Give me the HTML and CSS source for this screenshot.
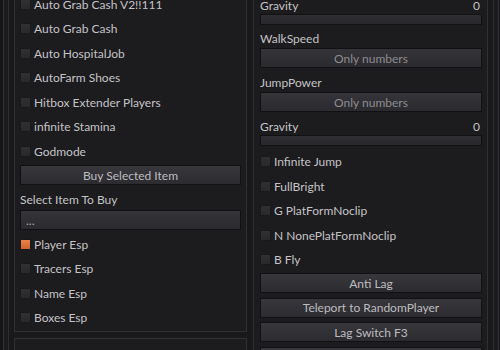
FILE: index.html
```html
<!DOCTYPE html>
<html>
<head>
<meta charset="utf-8">
<link rel="stylesheet" href="styles.css">
</head>
<body>
<div class="window">
  <div class="inner">
    <div class="col-left">
      <div class="panel panel-left">
        <div class="row"><span class="cb"></span><span>Auto Grab Cash V2!!111</span></div>
        <div class="row"><span class="cb"></span><span>Auto Grab Cash</span></div>
        <div class="row"><span class="cb"></span><span>Auto HospitalJob</span></div>
        <div class="row"><span class="cb"></span><span>AutoFarm Shoes</span></div>
        <div class="row"><span class="cb"></span><span>Hitbox Extender Players</span></div>
        <div class="row"><span class="cb"></span><span>infinite Stamina</span></div>
        <div class="row"><span class="cb"></span><span>Godmode</span></div>
        <div class="btn btn-buy">Buy Selected Item</div>
        <div class="label label-select">Select Item To Buy</div>
        <div class="input input-left">...</div>
        <div class="row row-esp"><span class="cb on"></span><span>Player Esp</span></div>
        <div class="row"><span class="cb"></span><span>Tracers Esp</span></div>
        <div class="row"><span class="cb"></span><span>Name Esp</span></div>
        <div class="row"><span class="cb"></span><span>Boxes Esp</span></div>
      </div>
      <div class="panel panel-bottom"></div>
    </div>
    <div class="col-right">
      <div class="panel panel-right">
        <div class="slider-head"><span>Gravity</span><span>0</span></div>
        <div class="slider-bar"></div>
        <div class="label label-field label-walk">WalkSpeed</div>
        <div class="input input-num">Only numbers</div>
        <div class="label label-field label-jump">JumpPower</div>
        <div class="input input-num">Only numbers</div>
        <div class="slider-head slider-head2"><span>Gravity</span><span>0</span></div>
        <div class="slider-bar"></div>
        <div class="rows-right">
          <div class="row row-r"><span class="cb"></span><span>Infinite Jump</span></div>
          <div class="row row-r"><span class="cb"></span><span>FullBright</span></div>
          <div class="row row-r"><span class="cb"></span><span>G PlatFormNoclip</span></div>
          <div class="row row-r"><span class="cb"></span><span>N NonePlatFormNoclip</span></div>
          <div class="row row-r"><span class="cb"></span><span>B Fly</span></div>
        </div>
        <div class="btn-list">
          <div class="btn">Anti Lag</div>
          <div class="btn">Teleport to RandomPlayer</div>
          <div class="btn">Lag Switch F3</div>
          <div class="btn"></div>
        </div>
      </div>
    </div>
  </div>
</div>
</body>
</html>
```

FILE: styles.css
```css
html, body {
  margin: 0;
  padding: 0;
  width: 500px;
  height: 350px;
  overflow: hidden;
  background: #151417;
}

body {
  font-family: "Lato", "Open Sans", sans-serif;
  font-size: 12px;
  color: #c4c3c6;
}

.window {
  margin-top: -20.25px;
  margin-left: 3px;
  width: 496px;
  height: 420px;
  box-sizing: border-box;
  border: 1px solid #343337;
  background: #1b1a1d;
  padding: 4px;
}

.inner {
  height: 100%;
  box-sizing: border-box;
  border: 1px solid #2e2d31;
  background: #19181b;
  padding: 5px;
  display: flex;
  gap: 6px;
}

.col-left {
  width: 233px;
  flex: none;
  display: flex;
  flex-direction: column;
  gap: 6px;
}

.col-right {
  flex: 1;
  display: flex;
  flex-direction: column;
}

.panel {
  box-sizing: border-box;
  border: 1px solid #302f33;
  background: #1c1b1e;
  padding: 0 5px 1px 5px;
  display: flex;
  flex-direction: column;
}

.panel-bottom {
  flex: 1;
}

.panel-right {
  flex: 1;
  padding-top: 4.75px;
  padding-right: 5px;
  padding-left: 6px;
}

.row {
  height: 24.5px;
  display: flex;
  align-items: center;
  gap: 3px;
  white-space: nowrap;
}

.cb {
  width: 9px;
  height: 9px;
  flex: none;
  border: 1px solid #19181b;
  background: linear-gradient(#302f33, #29282b);
  box-sizing: content-box;
}

.cb.on {
  background: linear-gradient(#ec8248, #d0632e);
}

.btn {
  height: 20px;
  box-sizing: border-box;
  border: 1px solid #111013;
  background: linear-gradient(#38373b, #2c2b2f);
  display: flex;
  align-items: center;
  justify-content: center;
  color: #bdbcc0;
  white-space: nowrap;
  flex: none;
}

.btn-buy {
  margin-top: 2px;
}

.label {
  white-space: nowrap;
  line-height: 16px;
}

.label-select {
  height: 24.75px;
  box-sizing: border-box;
  padding-top: 7px;
}

.input {
  height: 20px;
  box-sizing: border-box;
  border: 1px solid #111013;
  background: linear-gradient(#353438, #2b2a2e);
  display: flex;
  align-items: center;
  flex: none;
}

.input-left {
  padding-left: 5px;
  color: #a9a8ac;
}

.input-num {
  justify-content: center;
  color: #8d8c90;
}

.row-esp {
  margin-top: 1.75px;
}

.slider-head {
  height: 17px;
  display: flex;
  align-items: center;
  justify-content: space-between;
  padding-right: 2px;
}

.slider-head2 {
  margin-top: 6px;
}

.slider-bar {
  height: 11px;
  box-sizing: border-box;
  border: 1px solid #111013;
  background: linear-gradient(#2f2e32, #28272b);
  flex: none;
}

.label-field {
  height: 18px;
  line-height: 18px;
}

.label-walk {
  margin-top: 5.5px;
}

.label-jump {
  margin-top: 6.3px;
}

.rows-right {
  margin-top: 3px;
  display: flex;
  flex-direction: column;
}

.btn-list {
  margin-top: 1.5px;
  display: flex;
  flex-direction: column;
  gap: 4.5px;
}
```
